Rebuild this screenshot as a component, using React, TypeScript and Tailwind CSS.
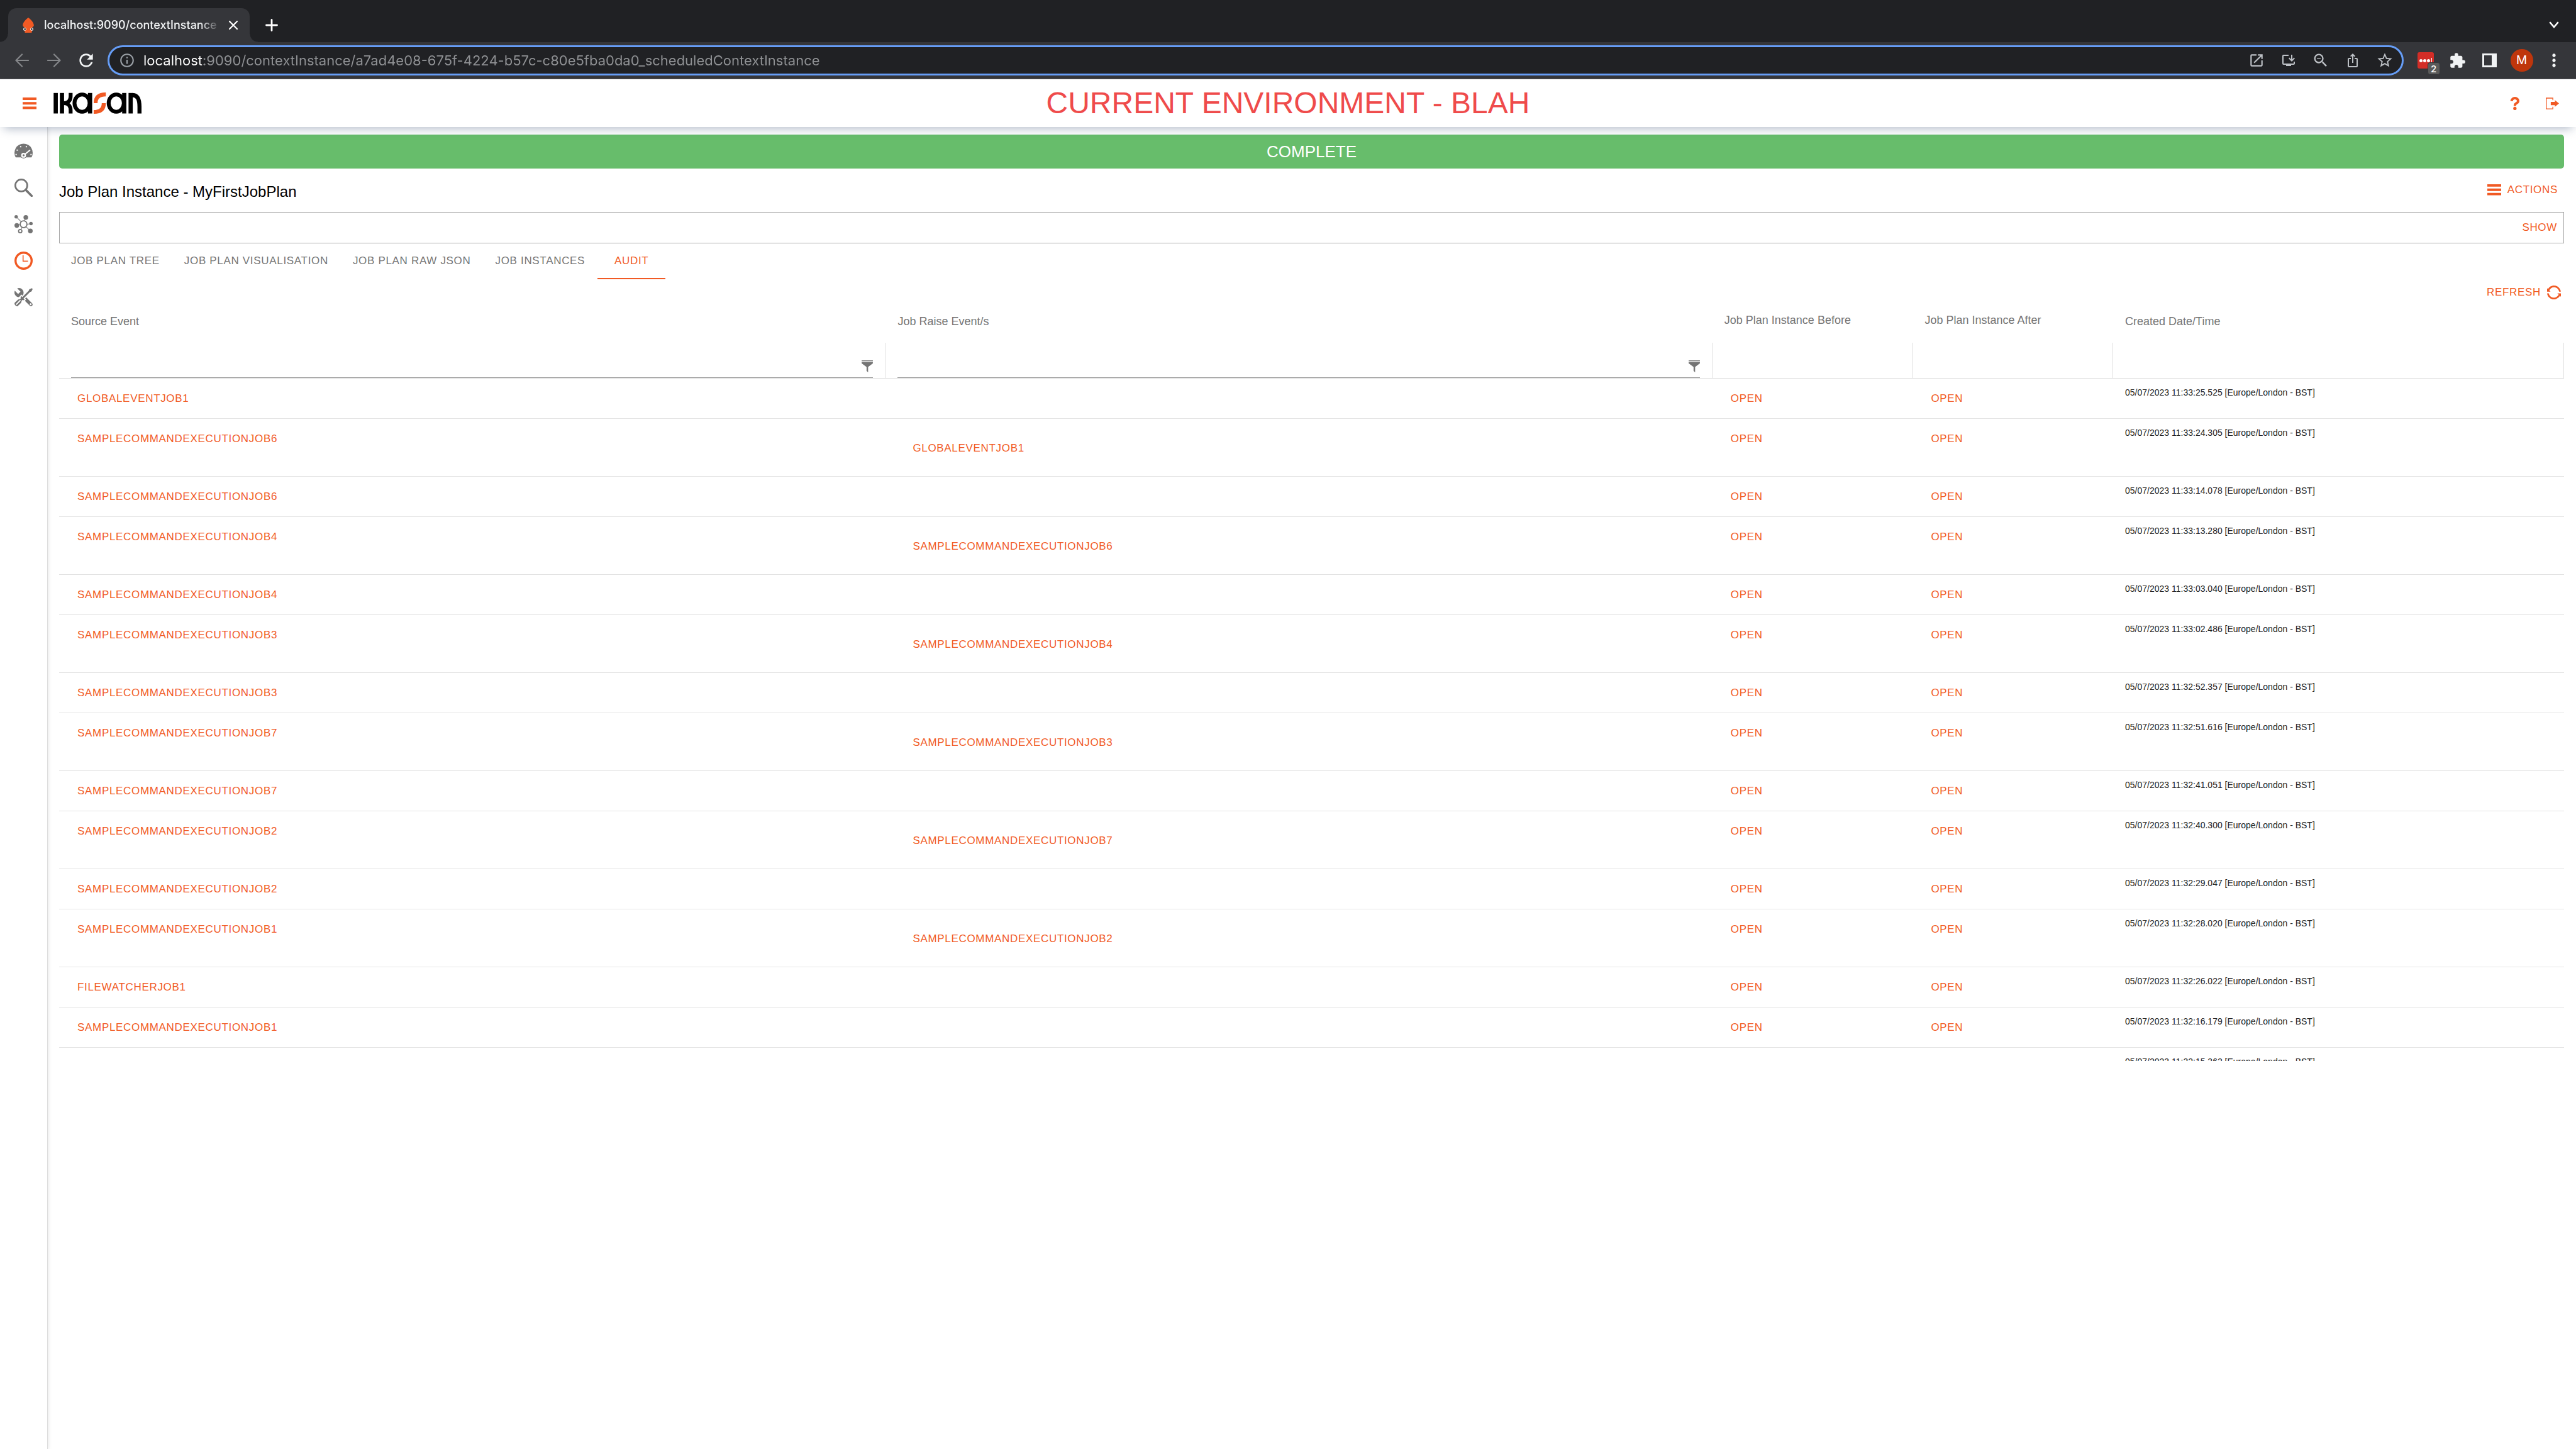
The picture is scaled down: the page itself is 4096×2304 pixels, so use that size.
import type { ReactNode } from "react";
import {
  MdExtension,
  MdInfoOutline,
  MdInstallDesktop,
  MdIosShare,
  MdMoreVert,
  MdOpenInNew,
  MdRefresh,
  MdStarBorder,
  MdZoomOut,
} from "react-icons/md";

type AuditRow = { source?: string; raised?: string; created: string };

const CMD = "SAMPLECOMMANDEXECUTIONJOB";

const rows: AuditRow[] = [
  { source: "GLOBALEVENTJOB1", created: "11:33:25.525" },
  { source: CMD + "6", raised: "GLOBALEVENTJOB1", created: "11:33:24.305" },
  { source: CMD + "6", created: "11:33:14.078" },
  { source: CMD + "4", raised: CMD + "6", created: "11:33:13.280" },
  { source: CMD + "4", created: "11:33:03.040" },
  { source: CMD + "3", raised: CMD + "4", created: "11:33:02.486" },
  { source: CMD + "3", created: "11:32:52.357" },
  { source: CMD + "7", raised: CMD + "3", created: "11:32:51.616" },
  { source: CMD + "7", created: "11:32:41.051" },
  { source: CMD + "2", raised: CMD + "7", created: "11:32:40.300" },
  { source: CMD + "2", created: "11:32:29.047" },
  { source: CMD + "1", raised: CMD + "2", created: "11:32:28.020" },
  { source: "FILEWATCHERJOB1", created: "11:32:26.022" },
  { source: CMD + "1", created: "11:32:16.179" },
  { created: "11:32:15.362" },
];

function BarsIcon({ className }: { className: string }) {
  return (
    <svg viewBox="0 0 16 14" className={className} fill="currentColor" preserveAspectRatio="none" aria-hidden="true">
      <path d="M0 0h16v3H0zM0 5.3h16v3H0zM0 10.7h16v3H0z" />
    </svg>
  );
}

function Favicon() {
  return (
    <svg viewBox="0 0 66 90" className="h-6 w-[18px] shrink-0" aria-hidden="true">
      <path d="M33 0C46 8 66 30 66 46c0 5-4 8-10 12l-1 22-2 10H13l-2-10-1-22C4 54 0 51 0 46 0 30 20 8 33 0z" fill="#f15a24" />
      <circle cx="12" cy="69" r="9" fill="#fff" />
      <circle cx="54" cy="69" r="9" fill="#fff" />
      <circle cx="13" cy="69" r="5" fill="#222" />
      <circle cx="53" cy="69" r="5" fill="#222" />
    </svg>
  );
}

function Logo() {
  return (
    <svg viewBox="0 0 523 126" className="h-[34px] w-[140px]" role="img" aria-label="Ikasan" preserveAspectRatio="none">
      <g fill="#000">
        <rect x="1" y="3" width="25" height="121" />
        <rect x="38" y="3" width="25" height="121" />
        <rect x="205" y="3" width="25" height="121" />
        <rect x="408" y="3" width="25" height="121" />
        <rect x="446" y="3" width="25" height="121" />
        <path d="M470 3C510 5 523 36 523 84V124H499V84C499 48 492 30 470 28z" />
      </g>
      <g fill="none" stroke="#000" strokeWidth="23">
        <path d="M102 3V22C102 46 88 63 62 63" />
        <path d="M62 63C88 63 102 82 102 105V124" />
        <ellipse cx="170" cy="63" rx="45" ry="51" />
        <ellipse cx="373" cy="63" rx="45" ry="51" />
      </g>
      <g fill="#f15a24">
        <path d="M311 0C262 0 239 22 239 63H262C262 36 277 23 311 23z" />
        <path d="M311 63C311 106 288 126 239 126V104C273 104 287 90 287 63z" />
      </g>
    </svg>
  );
}

function GaugeIcon() {
  return (
    <svg viewBox="0 0 36 36" className="size-[29px]" aria-hidden="true">
      <path d="M2.4 30A18 18 0 1 1 33.6 30z" fill="currentColor" />
      <circle cx="18" cy="26" r="6.3" fill="currentColor" />
      <path d="M18 26L31 15.5" stroke="#fff" strokeWidth="2.6" />
      <circle cx="18" cy="26" r="4.8" fill="#fff" />
      <circle cx="18" cy="26" r="2" fill="currentColor" />
      <path
        d="M11 7.8h2.5v2.5H11zM22.2 7.8h2.5v2.5h-2.5zM4.2 14.5h2.5V17H4.2zM2 23.4h2.5v2.5H2zM31.5 23.4H34v2.5h-2.5z"
        fill="#fff"
      />
    </svg>
  );
}

function SearchIcon() {
  return (
    <svg viewBox="0 0 36 36" className="size-[29px]" fill="none" stroke="currentColor" aria-hidden="true">
      <circle cx="13.5" cy="13.5" r="11.8" strokeWidth="3.4" />
      <path d="M22.5 22.5L34 34" strokeWidth="4.4" strokeLinecap="round" />
    </svg>
  );
}

function ClusterIcon() {
  return (
    <svg viewBox="0 0 36 36" className="size-[29px]" fill="currentColor" stroke="currentColor" aria-hidden="true">
      <g stroke="none">
        <circle cx="3.4" cy="3.4" r="3.4" />
        <circle cx="22.4" cy="4.6" r="4.6" />
        <circle cx="32.6" cy="16.8" r="3.4" />
        <circle cx="4.6" cy="20.4" r="4.6" />
        <circle cx="31.4" cy="31.4" r="4.6" />
      </g>
      <g fill="none">
        <circle cx="18" cy="18" r="6.7" strokeWidth="2.2" />
        <circle cx="11.4" cy="31.6" r="3.3" strokeWidth="2.2" />
        <path d="M4 4l9 9M22 5l-2 7M32 17l-7 1M5 20l6-1M31 31l-8-8M13 28l2-4" strokeWidth="1.3" />
      </g>
    </svg>
  );
}

function ClockIcon() {
  return (
    <svg viewBox="0 0 36 36" className="size-[29px]" aria-hidden="true">
      <circle cx="18" cy="18" r="15.9" fill="none" stroke="currentColor" strokeWidth="4.2" />
      <path d="M16 7v13h10.8v-2H18V7z" fill="currentColor" />
    </svg>
  );
}

function ToolsIcon() {
  return (
    <svg viewBox="0 0 16 16" className="size-[29px]" fill="currentColor" aria-hidden="true">
      <path d="M10.3 8.2l-0.9 0.9 0.9 0.9-1.2 1.2 4.3 4.3c0.6 0.6 1.5 0.6 2.1 0s0.6-1.5 0-2.1l-5.2-5.2zM14.2 15c-0.4 0-0.8-0.3-0.8-0.8 0-0.4 0.3-0.8 0.8-0.8s0.8 0.3 0.8 0.8c0 0.5-0.3 0.8-0.8 0.8z" />
      <path d="M3.6 8l0.9-0.6 1.5-1.7 0.9 0.9 0.9-0.9-0.1-0.1c0.2-0.5 0.3-1 0.3-1.6 0-2.2-1.8-4-4-4-0.6 0-1.1 0.1-1.6 0.3l2.9 2.9-2.1 2.1-2.9-2.9c-0.2 0.5-0.3 1-0.3 1.6 0 2.1 1.6 3.7 3.6 4z" />
      <path d="M8 10.8l0.9-0.8-0.9-0.9 5.7-5.7 1.2-0.4 1.1-2.2-0.7-0.7-2.3 1-0.5 1.2-5.6 5.7-0.9-0.9-0.8 0.9c0 0 0.8 0.6-0.1 1.5-0.5 0.5-1.3-0.1-2.8 1.4-0.5 0.5-2.1 2.1-2.1 2.1s-0.6 1 0.6 2.2 2.2 0.6 2.2 0.6 1.6-1.6 2.1-2.1c1.4-1.4 0.9-2.3 1.3-2.7 0.9-0.9 1.6-0.2 1.6-0.2zM4.9 10.4l0.7 0.7-3.8 3.8-0.7-0.7z" />
    </svg>
  );
}

function FilterIcon() {
  return (
    <svg viewBox="0 0 16 17" className="h-[19px] w-[18px] shrink-0 text-[#757575]" fill="currentColor" aria-hidden="true">
      <path d="M0 0h16v1.2H0zM0 2.2h16v2L9.2 9.5V17L7 15V9.5L0 4.2z" />
    </svg>
  );
}

function Slot({ label, children }: { label: string; children: ReactNode }) {
  return (
    <button type="button" aria-label={label} className="flex h-12 w-[51px] shrink-0 items-center justify-center">
      {children}
    </button>
  );
}

function LinkButton({ children }: { children: ReactNode }) {
  return (
    <button type="button" className="block text-[17px] leading-6 tracking-[0.04em] text-[#f15a24] uppercase">
      {children}
    </button>
  );
}

function BrowserChrome() {
  return (
    <div className="font-[Inter,Roboto,sans-serif]">
      <div className="flex h-[67px] items-end bg-[#202124] pl-[13px]">
        <div className="relative flex h-[54px] w-96 items-center rounded-t-[13px] bg-[#35363a] pr-[18px] pl-[23px]">
          <span className="absolute bottom-0 -left-[13px] size-[13px] bg-[radial-gradient(circle_at_0_0,#202124_12px,#35363a_13px)]" />
          <span className="absolute -right-[13px] bottom-0 size-[13px] bg-[radial-gradient(circle_at_100%_0,#202124_12px,#35363a_13px)]" />
          <Favicon />
          <span className="ml-4 flex-1 overflow-hidden text-[18px] leading-6 font-medium whitespace-nowrap text-[#f1f3f4] [mask-image:linear-gradient(90deg,#000_88%,transparent)]">
            localhost:9090/contextInstance
          </span>
          <button type="button" aria-label="Close tab" className="ml-3 flex size-4 items-center justify-center">
            <svg viewBox="0 0 16 16" className="size-4" stroke="#fff" strokeWidth="2.2" strokeLinecap="round">
              <path d="M2 2l12 12M14 2L2 14" />
            </svg>
          </button>
        </div>
        <button type="button" aria-label="New tab" className="ml-[25px] flex h-[54px] w-5 items-center justify-center">
          <svg viewBox="0 0 20 20" className="size-5" stroke="#fff" strokeWidth="2.8" strokeLinecap="round">
            <path d="M10 1.5v17M1.5 10h17" />
          </svg>
        </button>
        <button type="button" aria-label="Search tabs" className="mr-[27px] ml-auto flex h-[54px] w-4 items-center justify-center">
          <svg viewBox="0 0 16 12" className="w-4" fill="none" stroke="#fff" strokeWidth="2.6" strokeLinecap="round">
            <path d="M2 2l6 7 6-7" />
          </svg>
        </button>
      </div>
      <div className="flex h-[59px] items-center border-b border-[#5c5c60] bg-[#35363a] pr-[10px] pl-[9px]">
        <Slot label="Back">
          <svg viewBox="0 0 22 22" className="size-[22px]" fill="none" stroke="#85878a" strokeWidth="2.2" strokeLinecap="round">
            <path d="M21 11H1.5M11 1.5L1.5 11l9.5 9.5" />
          </svg>
        </Slot>
        <Slot label="Forward">
          <svg viewBox="0 0 22 22" className="size-[22px]" fill="none" stroke="#85878a" strokeWidth="2.2" strokeLinecap="round">
            <path d="M1 11h19.5M11 1.5l9.5 9.5-9.5 9.5" />
          </svg>
        </Slot>
        <Slot label="Reload">
          <MdRefresh className="size-8 text-[#f1f3f4]" />
        </Slot>
        <div className="ml-[9px] flex h-12 flex-1 items-center rounded-full border-[3px] border-[#669df6] bg-[#202124] pr-0.5 pl-[15px] text-[#bdc1c6]">
          <MdInfoOutline className="size-[26px] shrink-0 text-[#9aa0a6]" />
          <input
            type="text"
            aria-label="Address"
            defaultValue="localhost:9090/contextInstance/a7ad4e08-675f-4224-b57c-c80e5fba0da0_scheduledContextInstance"
            className="ml-[13px] h-8 flex-1 bg-[linear-gradient(90deg,#fff_96px,#8f9194_96px)] bg-clip-text text-[22px] text-transparent outline-none"
          />
          <Slot label="Open in new window">
            <MdOpenInNew className="size-[26px]" />
          </Slot>
          <Slot label="Install">
            <MdInstallDesktop className="size-6" />
          </Slot>
          <Slot label="Zoom">
            <MdZoomOut className="size-7" />
          </Slot>
          <Slot label="Share">
            <MdIosShare className="size-6" />
          </Slot>
          <Slot label="Bookmark">
            <MdStarBorder className="size-7" />
          </Slot>
        </div>
        <div className="ml-[9px] flex items-center text-[#f1f3f4]">
          <Slot label="Password manager">
            <span className="relative flex size-[26px] items-center gap-px rounded-[3px] bg-[#d32d27] pl-[3px]">
              <span className="size-[5px] rounded-full bg-white" />
              <span className="size-[5px] rounded-full bg-white" />
              <span className="size-[5px] rounded-full bg-white" />
              <span className="ml-px h-2 w-px bg-white" />
              <span className="absolute -right-[10px] -bottom-[10px] flex size-[20px] items-center justify-center rounded-[4px] border border-[#35363a] bg-[#5a5a5a] text-[15px] leading-none font-medium text-white">
                2
              </span>
            </span>
          </Slot>
          <Slot label="Extensions">
            <MdExtension className="size-[27px]" />
          </Slot>
          <Slot label="Side panel">
            <span className="block h-[22px] w-[23px] border-[3px] border-r-8 border-[#f1f3f4]" />
          </Slot>
          <Slot label="Profile">
            <span className="flex size-9 items-center justify-center rounded-full bg-[#bf360c] text-[19px] text-white">M</span>
          </Slot>
          <Slot label="Menu">
            <MdMoreVert className="size-8" />
          </Slot>
        </div>
      </div>
    </div>
  );
}

function AppHeader() {
  return (
    <header className="relative z-10 grid h-[76px] grid-cols-[1fr_auto_1fr] items-center bg-white px-[27px] shadow-[0_8px_15px_-6px_rgba(20,45,90,0.35)]">
      <div className="flex items-center gap-[27px] pl-[9px]">
        <button type="button" aria-label="Toggle menu" className="text-[#f15a24]">
          <BarsIcon className="h-[19px] w-[22px]" />
        </button>
        <Logo />
      </div>
      <h1 className="text-[48px] leading-none text-[#ef4b4b]">CURRENT ENVIRONMENT - BLAH</h1>
      <div className="flex items-center justify-end gap-[38px] text-[#f15a24]">
        <button type="button" aria-label="Help">
          <svg viewBox="0 0 16 16" className="size-[21px]" fill="currentColor">
            <path d="M9 11h-3c0-3 1.6-4 2.7-4.6 0.4-0.2 0.7-0.4 0.9-0.6 0.5-0.5 0.3-1.2 0.2-1.4-0.3-0.7-1-1.4-2.3-1.4-2.1 0-2.5 1.9-2.5 2.3l-3-0.4c0.2-1.7 1.7-4.9 5.5-4.9 2.3 0 4.3 1.3 5.1 3.2 0.7 1.7 0.4 3.5-0.8 4.7-0.5 0.5-1.1 0.8-1.6 1.1-0.9 0.5-1.2 1-1.2 2z" />
            <circle cx="7.5" cy="14" r="2" />
          </svg>
        </button>
        <button type="button" aria-label="Log out">
          <svg viewBox="0 0 16 16" className="size-[21px]" fill="currentColor">
            <path d="M9 4V1H0v14h9v-3H8v2H1V2h7v2z" />
            <path d="M16 8l-5-4v2H6v4h5v2z" />
          </svg>
        </button>
      </div>
    </header>
  );
}

function Sidebar() {
  return (
    <nav
      aria-label="Main"
      className="flex w-[76px] shrink-0 flex-col items-center gap-[29px] border-r border-[#dcdcdc] pt-6 text-[#757575] shadow-[2px_0_5px_rgba(0,0,0,0.08)]"
    >
      <a href="#dashboard" aria-label="Dashboard"><GaugeIcon /></a>
      <a href="#search" aria-label="Search"><SearchIcon /></a>
      <a href="#visualisation" aria-label="Visualisation"><ClusterIcon /></a>
      <a href="#scheduler" aria-label="Scheduler" className="text-[#f15a24]"><ClockIcon /></a>
      <a href="#administration" aria-label="Administration"><ToolsIcon /></a>
    </nav>
  );
}

const tabs = ["JOB PLAN TREE", "JOB PLAN VISUALISATION", "JOB PLAN RAW JSON", "JOB INSTANCES"];

function Tabs() {
  return (
    <div role="tablist" className="flex gap-px text-[17px] leading-6 tracking-[0.04em] text-[#757575]">
      {tabs.map((tab) => (
        <button key={tab} type="button" role="tab" aria-selected="false" className="h-[57px] px-[19px] pb-0.5">
          {tab}
        </button>
      ))}
      <button
        type="button"
        role="tab"
        aria-selected="true"
        className="h-[57px] min-w-[108px] border-b-2 border-[#f15a24] text-[#f15a24]"
      >
        AUDIT
      </button>
    </div>
  );
}

function FilterCell({ label }: { label: string }) {
  return (
    <th className="h-[57px] border-r border-b border-[#e0e0e0] px-[19px] py-0 align-bottom">
      <div className="flex items-center border-b border-[#8f8f8f]">
        <input type="text" aria-label={label} className="h-9 min-w-0 flex-1 text-[17px] font-normal outline-none" />
        <FilterIcon />
      </div>
    </th>
  );
}

function AuditTable() {
  return (
    <div className="max-h-[1210px] overflow-hidden">
      <table className="w-full table-fixed border-separate border-spacing-0 text-left">
        <colgroup>
          <col className="w-[33%]" />
          <col className="w-[33%]" />
          <col className="w-[8%]" />
          <col className="w-[8%]" />
          <col className="w-[18%]" />
        </colgroup>
        <thead>
          <tr className="h-[68px] text-[18px] leading-6 text-[#757575]">
            <th className="px-[19px] py-0 font-normal">Source Event</th>
            <th className="px-[19px] py-0 font-normal">Job Raise Event/s</th>
            <th className="px-[19px] pt-0 pb-1 font-normal whitespace-nowrap">Job Plan Instance Before</th>
            <th className="px-[19px] pt-0 pb-1 font-normal whitespace-nowrap">Job Plan Instance After</th>
            <th className="px-[19px] py-0 font-normal">Created Date/Time</th>
          </tr>
          <tr>
            <FilterCell label="Filter source event" />
            <FilterCell label="Filter job raise events" />
            <td className="border-r border-b border-[#e0e0e0]" />
            <td className="border-r border-b border-[#e0e0e0]" />
            <td className="border-r border-b border-[#e0e0e0]" />
          </tr>
        </thead>
        <tbody className="[&_td]:border-b [&_td]:border-[#e3e3e3] [&_td]:align-top">
          {rows.map((row) => (
            <tr key={row.created} className={row.raised ? "h-[92px]" : "h-16"}>
              <td className="px-[29px] pt-5">{row.source && <LinkButton>{row.source}</LinkButton>}</td>
              <td className="px-[43px] pt-[35px]">{row.raised && <LinkButton>{row.raised}</LinkButton>}</td>
              <td className="px-[29px] pt-5">{row.source && <LinkButton>Open</LinkButton>}</td>
              <td className="px-[29px] pt-5">{row.source && <LinkButton>Open</LinkButton>}</td>
              <td className="px-[19px] pt-3 text-[14px] leading-5 text-[#212121]">
                05/07/2023 {row.created} [Europe/London - BST]
              </td>
            </tr>
          ))}
        </tbody>
      </table>
    </div>
  );
}

export default function App() {
  return (
    <div className="flex min-h-screen flex-col bg-white font-['Liberation_Sans',Arial,sans-serif] text-black">
      <BrowserChrome />
      <AppHeader />
      <div className="flex flex-1">
        <Sidebar />
        <main className="min-w-0 flex-1 pt-3 pr-[19px] pl-[18px]">
          <div className="flex h-[54px] items-center justify-center rounded-[5px] bg-[#67bd6b] text-[26px] text-white">
            COMPLETE
          </div>
          <div className="flex h-[69px] items-center justify-between pr-[10px]">
            <h2 className="pt-1 text-[24px]">Job Plan Instance - MyFirstJobPlan</h2>
            <button type="button" className="flex items-center gap-[10px] pb-0.5 text-[17px] leading-6 tracking-[0.04em] text-[#f15a24]">
              <BarsIcon className="h-[18px] w-[22px]" />
              ACTIONS
            </button>
          </div>
          <div className="flex h-[50px] items-center justify-end border border-[#a6a6a6] pr-[10px]">
            <LinkButton>Show</LinkButton>
          </div>
          <Tabs />
          <div className="flex h-[33px] items-end justify-end pr-[5px]">
            <button type="button" className="flex items-center gap-[10px] text-[17px] leading-6 tracking-[0.04em] text-[#f15a24]">
              REFRESH
              <svg viewBox="0 0 16 16" className="size-[22px]" fill="currentColor" aria-hidden="true">
                <path d="M2.6 5.6c0.9-2.1 3-3.6 5.4-3.6 3 0 5.4 2.2 5.9 5h2c-0.5-3.9-3.8-7-7.9-7-3 0-5.6 1.6-6.9 4.1l-1.1-1.1v4h4l-1.4-1.4z" />
                <path d="M16 9h-4.1l1.5 1.4c-0.9 2.1-3 3.6-5.5 3.6-2.9 0-5.4-2.2-5.9-5h-2c0.5 3.9 3.9 7 7.9 7 3 0 5.6-1.7 7-4.1l1.1 1.1v-4z" />
              </svg>
            </button>
          </div>
          <AuditTable />
        </main>
      </div>
    </div>
  );
}
